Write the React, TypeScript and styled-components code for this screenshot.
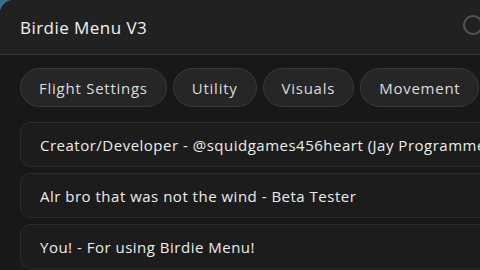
import React from "react";
import styled, { createGlobalStyle } from "styled-components";

const Global = createGlobalStyle`
  html, body { margin: 0; padding: 0; width: 480px; height: 270px; overflow: hidden; }
  body { background: #3b6d8c; font-family: "Open Sans", "DejaVu Sans", sans-serif; }
`;

const Window = styled.div`
  width: 480px;
  height: 270px;
  background: #181818;
  border-top-left-radius: 14px;
  overflow: hidden;
  display: flex;
  flex-direction: column;
`;

const Header = styled.div`
  height: 55px;
  flex: none;
  background: #212121;
  border-bottom: 1px solid #353535;
  display: flex;
  align-items: center;
  justify-content: space-between;
  padding-left: 20px;
  box-sizing: border-box;
`;

const Title = styled.div`
  color: #f2f2f2;
  font-size: 17px;
  font-weight: 500;
  letter-spacing: 0.45px;
`;

const CloseRing = styled.div`
  width: 20px;
  height: 20px;
  box-sizing: border-box;
  border: 2px solid #555;
  border-radius: 50%;
  margin-right: -3px;
  margin-top: -4px;
  flex: none;
`;

const Body = styled.div`
  display: flex;
  flex-direction: column;
  padding: 13px 0 0 20px;
  gap: 15px;
`;

const Tabs = styled.div`
  display: flex;
  gap: 6px;
  white-space: nowrap;
`;

const Tab = styled.div`
  height: 39px;
  box-sizing: border-box;
  padding: 0 18px;
  border-radius: 20px;
  background: #262626;
  border: 1px solid #393939;
  color: #dcdcdc;
  font-size: 15px;
  letter-spacing: 0.75px;
  display: flex;
  align-items: center;
  flex: none;
`;

const List = styled.div`
  display: flex;
  flex-direction: column;
  gap: 6px;
`;

const Row = styled.div`
  height: 45px;
  box-sizing: border-box;
  width: 520px;
  border-radius: 10px;
  background: #1c1c1c;
  border: 1px solid #2c2c2c;
  color: #ececec;
  font-size: 15px;
  letter-spacing: 0.5px;
  display: flex;
  align-items: center;
  padding-left: 19px;
  white-space: nowrap;
  overflow: hidden;
`;

const tabs = ["Flight Settings", "Utility", "Visuals", "Movement"];
const credits = [
  "Creator/Developer - @squidgames456heart (Jay Programmer)",
  "Alr bro that was not the wind - Beta Tester",
  "You! - For using Birdie Menu!",
];

export default function App() {
  return (
    <>
      <Global />
      <Window>
        <Header>
          <Title>Birdie Menu V3</Title>
          <CloseRing />
        </Header>
        <Body>
          <Tabs>
            {tabs.map((t) => (
              <Tab key={t}>{t}</Tab>
            ))}
          </Tabs>
          <List>
            {credits.map((c) => (
              <Row key={c}>{c}</Row>
            ))}
          </List>
        </Body>
      </Window>
    </>
  );
}
